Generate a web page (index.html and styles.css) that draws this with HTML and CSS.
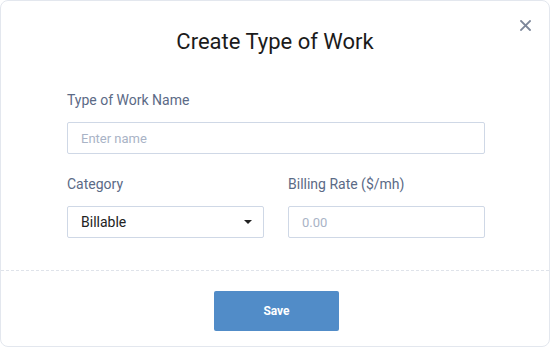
FILE: index.html
```html
<!DOCTYPE html>
<html>
<head>
<meta charset="utf-8">
<link rel="stylesheet" href="styles.css">
</head>
<body>
<div class="dialog">
  <button class="close" aria-label="Close">
    <svg width="11" height="11" viewBox="0 0 11 11"><path d="M1 1L10 10M10 1L1 10" stroke="#7d879a" stroke-width="1.8" stroke-linecap="square"/></svg>
  </button>
  <h1 class="title">Create Type of Work</h1>
  <div class="body">
    <div class="field">
      <label class="label">Type of Work Name</label>
      <div class="input placeholder">Enter name</div>
    </div>
    <div class="row">
      <div class="field">
        <label class="label">Category</label>
        <div class="input select">Billable<span class="caret"></span></div>
      </div>
      <div class="field">
        <label class="label">Billing Rate ($/mh)</label>
        <div class="input placeholder">0.00</div>
      </div>
    </div>
  </div>
  <div class="footer">
    <button class="save">Save</button>
  </div>
</div>
</body>
</html>
```
FILE: styles.css
```css
* { box-sizing: border-box; }
html, body { margin: 0; padding: 0; background: #fff; }
body { font-family: Roboto, "Liberation Sans", sans-serif; }
.dialog {
  position: relative;
  width: 550px;
  height: 347px;
  border: 1px solid #e3e7ee;
  border-radius: 8px;
  background: #fff;
  display: flex;
  flex-direction: column;
}
.close {
  position: absolute;
  top: 19px;
  right: 18px;
  padding: 0;
  border: 0;
  background: none;
  width: 11px;
  height: 11px;
  display: flex;
}
.title {
  margin: 0;
  padding-top: 26px;
  font-size: 22px;
  line-height: 30px;
  font-weight: 400;
  color: #1b1b1b;
  text-align: center;
}
.body {
  padding: 33px 64px 0 66px;
  display: flex;
  flex-direction: column;
  gap: 20px;
}
.field { display: flex; flex-direction: column; gap: 12px; }
.row { display: grid; grid-template-columns: 197px 197px; column-gap: 24px; }
.label {
  font-size: 14px;
  line-height: 20px;
  color: #5b6a86;
}
.input {
  height: 32px;
  border: 1px solid #cfd8e6;
  border-radius: 2px;
  padding: 0 13px;
  display: flex;
  align-items: center;
  font-size: 14px;
  color: #222;
}
.placeholder { color: #a9b3c6; font-size: 13px; }
.select { justify-content: space-between; padding-right: 11px; }
.caret {
  width: 0; height: 0;
  border-left: 4px solid transparent;
  border-right: 4px solid transparent;
  border-top: 4px solid #222;
}
.footer {
  margin-top: 32px;
  border-top: 1px dashed #dfe3ea;
  padding-top: 20px;
  display: flex;
  justify-content: center;
}
.save {
  width: 125px;
  height: 40px;
  border: 0;
  border-radius: 2px;
  background: #518cc8;
  color: #fff;
  font-family: Roboto, "Liberation Sans", sans-serif;
  font-weight: 700;
  font-size: 12px;
  margin-left: 3px;
}
```
